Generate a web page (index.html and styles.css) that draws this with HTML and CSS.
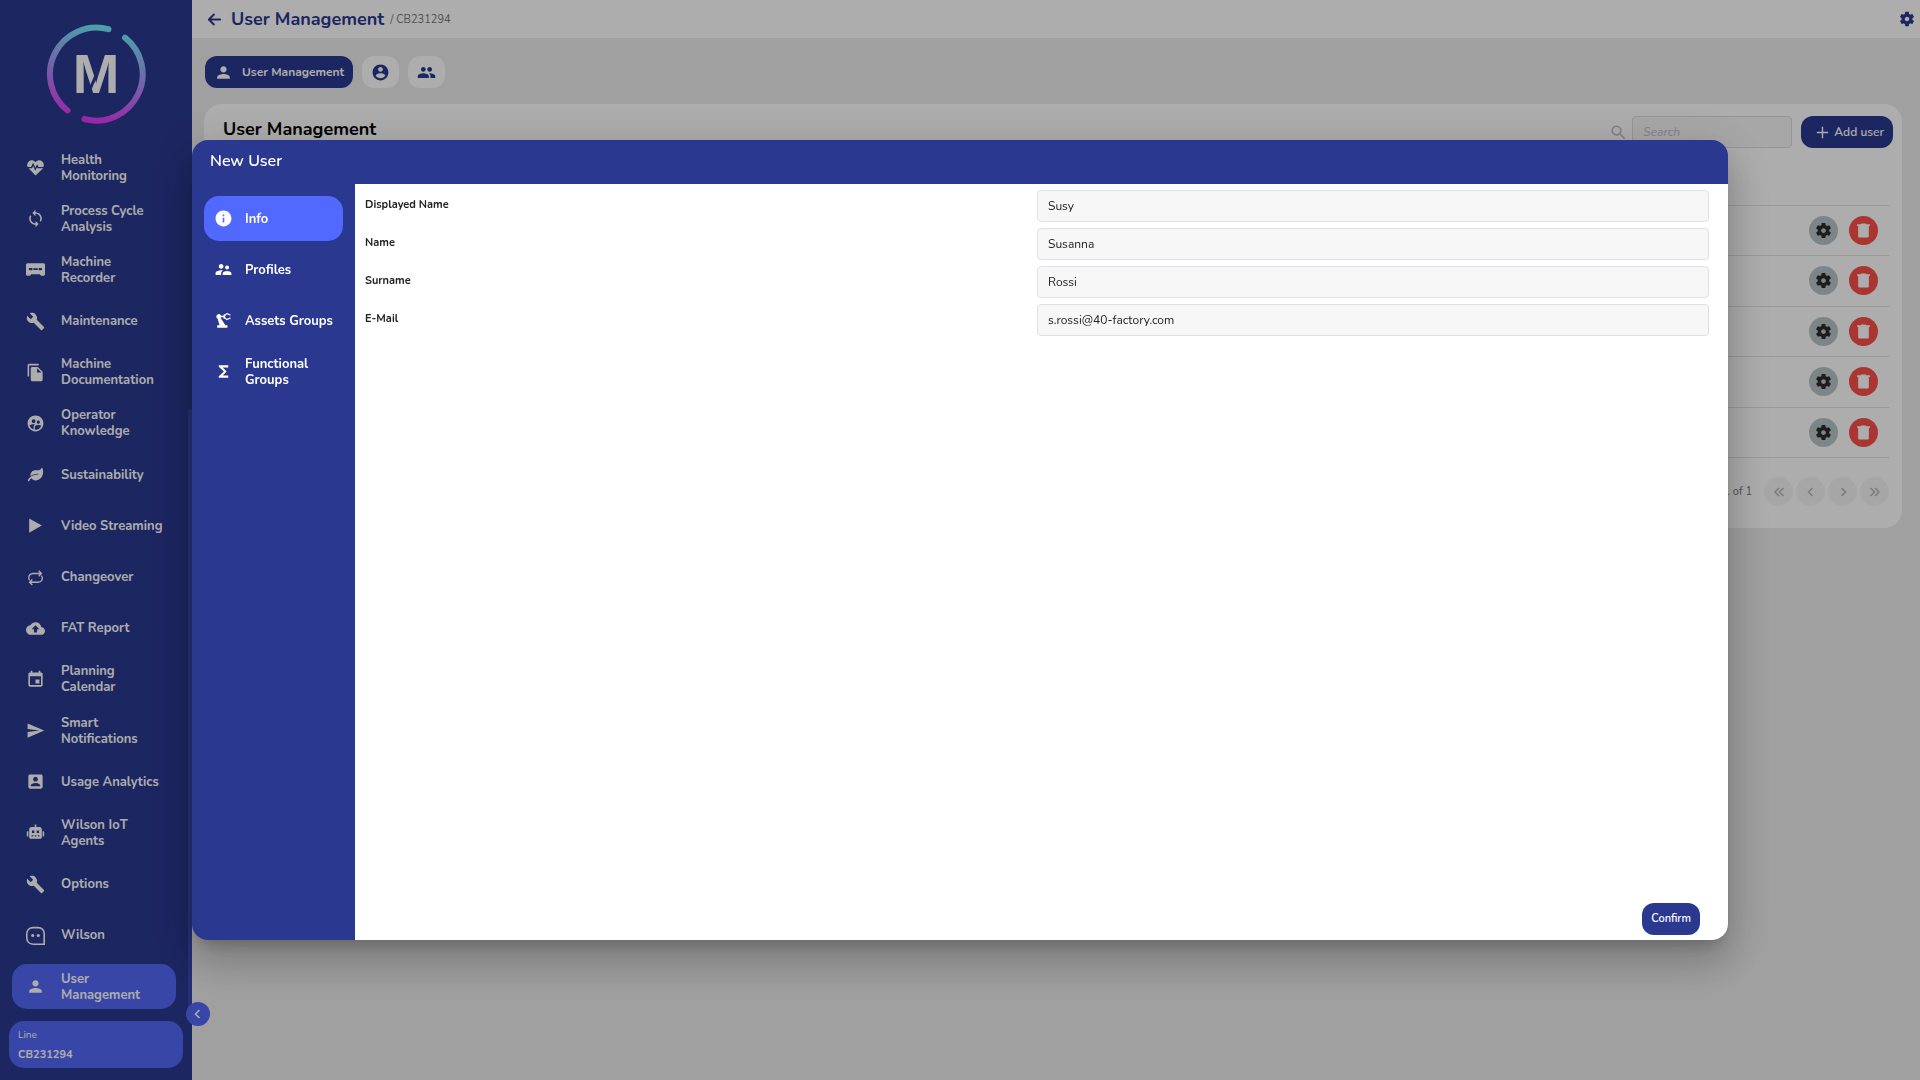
FILE: index.html
```html
<!DOCTYPE html>
<html lang="en">
  <head>
    <meta charset="UTF-8" />
    <meta name="viewport" content="width=device-width, initial-scale=1.0" />
    <title>User Management</title>
    <link rel="stylesheet" href="styles.css">
  </head>
  <body>
    <!-- icon sprite -->
    <svg class="sprite" aria-hidden="true">
      <symbol id="heart" viewBox="0 0 24 24">
        <path d="M12 22 3.3 13h4.2l1.6-3 2.6 6 2.2-4.4.8 1.4h7L12 22zM2 11.4C1 8.600 1.600 5.600 3.800 4 6.200 2.200 9.600 2.600 12 5.400c2.400-2.800 5.800-3.200 8.200-1.400 2.200 1.600 2.800 4.600 1.800 7.400h-6.200L14 8l-2.200 4.400L9 6l-2.600 5.400z" />
      </symbol>
      <symbol id="sync" viewBox="0 0 24 24">
        <path d="M12 4V1L8 5l4 4V6c3.310 0 6 2.690 6 6 0 1.010-.25 1.970-.7 2.800l1.460 1.460C19.540 15.030 20 13.570 20 12c0-4.420-3.580-8-8-8zm0 14c-3.310 0-6-2.690-6-6 0-1.010.25-1.970.7-2.800L5.240 7.740C4.460 8.970 4 10.430 4 12c0 4.420 3.580 8 8 8v3l4-4-4-4v3z" />
      </symbol>
      <symbol id="recorder" viewBox="0 0 24 24">
        <path fill-rule="evenodd" d="M2 4h20c1.100 0 2 .9 2 2v12c0 1.100-.9 2-2 2h-3l-1.500-2h-11L5 20H2c-1.100 0-2-.9-2-2V6c0-1.100.9-2 2-2zm3 6c-1 0-1.500.6-1.500 1.500S4 13 5 13h3v-3H5zm4.200.5v2h5.600v-2H9.200zM16 10v3h3c1 0 1.500-.6 1.500-1.500S20 10 19 10h-3z" />
      </symbol>
      <symbol id="wrench" viewBox="0 0 24 24">
        <path d="M22.700 19l-9.100-9.100c.9-2.300.4-5-1.500-6.900-2-2-5-2.400-7.400-1.300L9 6 6 9 1.600 4.700C.4 7.100.9 10.100 2.900 12.100c1.900 1.900 4.600 2.400 6.900 1.500l9.100 9.100c.4.4 1 .4 1.400 0l2.300-2.300c.5-.4.5-1.100.1-1.400z" />
      </symbol>
      <symbol id="copy" viewBox="0 0 24 24">
        <path d="M16 1H4c-1.100 0-2 .9-2 2v14h2V3h12V1zm-1 4l6 6v10c0 1.100-.9 2-2 2H8c-1.100 0-2-.9-2-2V7c0-1.100.9-2 2-2h7zm-1 7h5.500L14 6.500V12z" />
      </symbol>
      <symbol id="group-circle" viewBox="0 0 24 24">
        <path d="M12 2C6.480 2 2 6.480 2 12s4.480 10 10 10 10-4.480 10-10S17.520 2 12 2zm3.610 6.340c1.070 0 1.930.86 1.930 1.930s-.86 1.930-1.930 1.930-1.930-.86-1.930-1.930.86-1.930 1.930-1.930zm-6-1.580c1.300 0 2.360 1.060 2.360 2.360s-1.060 2.360-2.360 2.360-2.360-1.060-2.360-2.360 1.050-2.360 2.360-2.360zm0 9.130v3.750c-2.400-.75-4.300-2.600-5.140-4.960 1.050-1.120 3.670-1.690 5.140-1.690.53 0 1.200.08 1.900.22-1.640.87-1.900 2.020-1.900 2.680zM12 20c-.27 0-.53-.01-.79-.04v-4.070c0-1.420 2.940-2.130 4.400-2.130 1.070 0 2.920.39 3.840 1.150C18.280 17.880 15.390 20 12 20z" />
      </symbol>
      <symbol id="leaf" viewBox="-70 -80 716 672">
        <path d="M546 10c-6-13-22-13-28-1-31 53-87 87-150 87h-80C182 96 96 182 96 288c0 7 1 14 2 20 63-45 156-84 286-84 9 0 16 7 16 16s-7 16-16 16C133 256 26 410 2 468c-6 16 2 35 18 42 16 6 35-2 42-18 1-4 20-48 72-90 32 44 94 85 174 77 158-12 268-153 268-325 0-50-11-102-30-144z" />
      </symbol>
      <symbol id="play" viewBox="0 0 24 24"><path d="M4 3v18l16-9z" /></symbol>
      <symbol id="repeat" viewBox="0 0 24 24">
        <g fill="none" stroke="currentColor" stroke-width="1.700">
          <path d="M4.500 15.500C2 12 4 7 8.500 7H19M16 3.500 19.500 7 16 10.500M19.500 9.500C22 13 20 18 15.500 18H5M8 14.500 4.500 18 8 21.500" />
        </g>
      </symbol>
      <symbol id="cloud" viewBox="0 0 24 24">
        <path d="M19.350 10.040C18.670 6.590 15.640 4 12 4 9.110 4 6.600 5.640 5.350 8.040 2.340 8.360 0 10.910 0 14c0 3.310 2.690 6 6 6h13c2.760 0 5-2.240 5-5 0-2.640-2.050-4.780-4.650-4.960zM14 13v4h-4v-4H7l5-5 5 5h-3z" />
      </symbol>
      <symbol id="calendar" viewBox="0 0 24 24">
        <path d="M17 12h-5v5h5v-5zM16 1v2H8V1H6v2H5c-1.100 0-2 .9-2 2v14c0 1.100.9 2 2 2h14c1.100 0 2-.9 2-2V5c0-1.100-.9-2-2-2h-1V1h-2zm3 18H5V8h14v11z" />
      </symbol>
      <symbol id="send" viewBox="0 0 24 24"><path d="M2 21l21-9L2 3v7l15 2-15 2z" /></symbol>
      <symbol id="account-box" viewBox="0 0 24 24">
        <path d="M3 5v14c0 1.100.9 2 2 2h14c1.100 0 2-.9 2-2V5c0-1.100-.9-2-2-2H5c-1.100 0-2 .9-2 2zm12 4c0 1.660-1.340 3-3 3s-3-1.340-3-3 1.340-3 3-3 3 1.340 3 3zm-9 8c0-2 4-3.100 6-3.100s6 1.100 6 3.100v1H6v-1z" />
      </symbol>
      <symbol id="robot" viewBox="0 0 24 24">
        <path fill-rule="evenodd" d="M11 2h2v3h4c1.700 0 3 1.300 3 3v10c0 1.100-.9 2-2 2H6c-1.100 0-2-.9-2-2V8c0-1.700 1.300-3 3-3h4V2zM7.500 9.500v3h3v-3h-3zm6 0v3h3v-3h-3zM7 15.500v1.500h2v-1.500H7zm4 0v1.500h2v-1.500h-2zm4 0v1.500h2v-1.500h-2zM1.500 10.500H3v6.500H2c-.6 0-1-.4-1-1v-4.500zM21 10.500h1c.6 0 1 .4 1 1V16c0 .6-.4 1-1 1h-1z" />
      </symbol>
      <symbol id="wilson" viewBox="0 0 24 24">
        <path fill="none" stroke="currentColor" stroke-width="2" d="M23 23H9c-5 0-8-3.500-8-8.500V10C1 5 4.500 2 9 2h6c5 0 8 3.500 8 8z" />
        <circle cx="8.500" cy="12" r="2" /><circle cx="15.500" cy="12" r="2" />
      </symbol>
      <symbol id="person" viewBox="0 0 24 24">
        <path d="M12 12c2.210 0 4-1.790 4-4s-1.790-4-4-4-4 1.790-4 4 1.790 4 4 4zm0 2c-2.670 0-8 1.340-8 4v2h16v-2c0-2.660-5.330-4-8-4z" />
      </symbol>
      <symbol id="account-circle" viewBox="0 0 24 24">
        <path d="M12 2C6.480 2 2 6.480 2 12s4.480 10 10 10 10-4.480 10-10S17.520 2 12 2zm0 3c1.660 0 3 1.340 3 3s-1.340 3-3 3-3-1.340-3-3 1.340-3 3-3zm0 14.200c-2.500 0-4.710-1.280-6-3.220.03-1.990 4-3.080 6-3.080 1.990 0 5.970 1.090 6 3.080-1.290 1.940-3.500 3.220-6 3.220z" />
      </symbol>
      <symbol id="people" viewBox="0 0 24 24">
        <path d="M16 11c1.660 0 3-1.340 3-3s-1.340-3-3-3-3 1.340-3 3 1.340 3 3 3zm-8 0c1.660 0 3-1.340 3-3S9.660 5 8 5 5 6.340 5 8s1.340 3 3 3zm0 2c-2.330 0-7 1.170-7 3.500V19h14v-2.500c0-2.330-4.670-3.500-7-3.500zm8 0c-.29 0-.62.02-.97.05 1.160.84 1.970 1.970 1.970 3.450V19h6v-2.500c0-2.330-4.670-3.500-7-3.500z" />
      </symbol>
      <symbol id="profiles" viewBox="0 0 24 24">
        <path d="M16.500 12c1.380 0 2.500-1.120 2.500-2.500S17.880 7 16.500 7 14 8.120 14 9.500s1.120 2.500 2.500 2.500zM9 11c1.660 0 3-1.340 3-3s-1.340-3-3-3-3 1.340-3 3 1.340 3 3 3zm7.500 3c-1.830 0-5.500.92-5.500 2.750V19h11v-2.250c0-1.830-3.670-2.750-5.500-2.750zM9 13c-2.330 0-7 1.170-7 3.500V19h7v-2.250c0-.85.33-2.340 2.370-3.470C10.500 13.100 9.660 13 9 13z" />
      </symbol>
      <symbol id="info" viewBox="0 0 24 24">
        <path d="M12 2C6.480 2 2 6.480 2 12s4.480 10 10 10 10-4.480 10-10S17.520 2 12 2zm1 15h-2v-6h2v6zm0-8h-2V7h2v2z" />
      </symbol>
      <symbol id="machine" viewBox="0 0 24 24">
        <path d="M19.900 8.300l-3.600 1.700L14 7.700V6.300L16.300 4l3.600 1.700c.4.200.8 0 1-.4.200-.4 0-.8-.3-1l-4-1.800c-.3-.2-.8-.1-1.100.2l-1.700 1.700C13.600 4.200 13.300 4 13 4c-.6 0-1 .4-1 1v1H8.800C8.300 4.600 7 3.700 5.400 4 4.200 4.300 3.200 5.300 3 6.500c-.2 1.300.5 2.500 1.500 3.100L7 18H4v3h13v-3h-2.600L8.400 8.800c.2-.3.300-.5.4-.8H12v1c0 .6.4 1 1 1 .3 0 .6-.2.8-.4l1.700 1.700c.3.300.8.4 1.100.2l4-1.800c.4-.2.500-.6.300-1-.2-.4-.6-.6-1-.4z" />
      </symbol>
      <symbol id="sigma" viewBox="0 0 24 24"><path d="M18 4H6v2l6.500 6L6 18v2h12v-3h-7l5-5-5-5h7z" /></symbol>
      <symbol id="gear" viewBox="0 0 24 24">
        <path d="M19.140 12.940c.04-.3.06-.61.06-.94 0-.32-.02-.64-.07-.94l2.030-1.580c.18-.14.23-.41.12-.61l-1.920-3.320c-.12-.22-.37-.29-.59-.22l-2.390.96c-.5-.38-1.030-.7-1.620-.94l-.36-2.540c-.04-.24-.24-.41-.48-.41h-3.840c-.24 0-.43.17-.47.41l-.36 2.540c-.59.24-1.130.57-1.620.94l-2.390-.96c-.22-.08-.47 0-.59.22L2.740 8.870c-.12.21-.08.47.12.61l2.030 1.580c-.05.3-.09.63-.09.94s.02.64.07.94l-2.030 1.580c-.18.14-.23.41-.12.61l1.920 3.320c.12.22.37.29.59.22l2.390-.96c.5.38 1.030.7 1.620.94l.36 2.540c.05.24.24.41.48.41h3.840c.24 0 .44-.17.47-.41l.36-2.540c.59-.24 1.130-.56 1.620-.94l2.390.96c.22.08.47 0 .59-.22l1.920-3.320c.12-.22.07-.47-.12-.61l-2.010-1.580zM12 15c-1.660 0-3-1.340-3-3s1.340-3 3-3 3 1.340 3 3-1.340 3-3 3z" />
      </symbol>
      <symbol id="search" viewBox="0 0 24 24">
        <path d="M15.500 14h-.79l-.28-.27C15.410 12.590 16 11.110 16 9.500 16 5.910 13.090 3 9.500 3S3 5.910 3 9.500 5.910 16 9.500 16c1.610 0 3.090-.59 4.230-1.570l.27.28v.79l5 4.990L20.490 19l-4.990-5zm-6 0C7.010 14 5 11.990 5 9.500S7.010 5 9.500 5 14 7.010 14 9.500 11.990 14 9.500 14z" />
      </symbol>
      <symbol id="plus" viewBox="0 0 24 24"><path d="M20 13h-7v7h-2v-7H4v-2h7V4h2v7h7z" /></symbol>
      <symbol id="trash" viewBox="0 0 24 24">
        <path d="M3 3h5l1-1h6l1 1h5v2.500h-1.500V20c0 1.100-.9 2-2 2h-11c-1.100 0-2-.9-2-2V5.500H3z" />
      </symbol>
      <symbol id="back" viewBox="0 0 24 24">
        <path fill="none" stroke="currentColor" stroke-width="3" stroke-linecap="round" stroke-linejoin="round" d="M21 12H4M11 4l-8 8 8 8" />
      </symbol>
      <symbol id="chevron-left" viewBox="0 0 24 24">
        <path fill="none" stroke="currentColor" stroke-width="3" d="M15 4l-8 8 8 8" />
      </symbol>
      <symbol id="chevron-right" viewBox="0 0 24 24">
        <path fill="none" stroke="currentColor" stroke-width="3" d="M9 4l8 8-8 8" />
      </symbol>
      <symbol id="first" viewBox="0 0 24 24">
        <path fill="none" stroke="currentColor" stroke-width="3" d="M12 4l-8 8 8 8M21 4l-8 8 8 8" />
      </symbol>
      <symbol id="last" viewBox="0 0 24 24">
        <path fill="none" stroke="currentColor" stroke-width="3" d="M12 4l8 8-8 8M3 4l8 8-8 8" />
      </symbol>
    </svg>

    <div class="app">
      <aside class="sidebar">
        <svg class="logo" viewBox="0 0 100 100" role="img" aria-label="M">
          <defs>
            <linearGradient id="ring" gradientUnits="userSpaceOnUse" x1="60" y1="5" x2="40" y2="95">
              <stop offset="0" stop-color="#73eafc" />
              <stop offset="1" stop-color="#e23bf7" />
            </linearGradient>
          </defs>
          <g fill="none" stroke="url(#ring)" stroke-width="6" stroke-linecap="round">
            <path d="M62.500 5.200A46.500 46.500 0 0 0 21.500 86.500" />
            <path d="M79 13.600A46.500 46.500 0 0 1 38.500 95.100" />
          </g>
          <text class="logo-letter" x="50" y="69" text-anchor="middle">M</text>
          <path class="logo-cut" d="M51 49 42 70" />
        </svg>

        <nav class="menu">
          <a href="#"><svg class="icon"><use href="#heart" /></svg><span>Health Monitoring</span></a>
          <a href="#"><svg class="icon"><use href="#sync" /></svg><span>Process Cycle Analysis</span></a>
          <a href="#"><svg class="icon"><use href="#recorder" /></svg><span>Machine Recorder</span></a>
          <a href="#"><svg class="icon"><use href="#wrench" /></svg><span>Maintenance</span></a>
          <a href="#"><svg class="icon"><use href="#copy" /></svg><span>Machine Documentation</span></a>
          <a href="#"><svg class="icon"><use href="#group-circle" /></svg><span>Operator Knowledge</span></a>
          <a href="#"><svg class="icon"><use href="#leaf" /></svg><span>Sustainability</span></a>
          <a href="#"><svg class="icon"><use href="#play" /></svg><span>Video Streaming</span></a>
          <a href="#"><svg class="icon"><use href="#repeat" /></svg><span>Changeover</span></a>
          <a href="#"><svg class="icon"><use href="#cloud" /></svg><span>FAT Report</span></a>
          <a href="#"><svg class="icon"><use href="#calendar" /></svg><span>Planning Calendar</span></a>
          <a href="#"><svg class="icon"><use href="#send" /></svg><span>Smart Notifications</span></a>
          <a href="#"><svg class="icon"><use href="#account-box" /></svg><span>Usage Analytics</span></a>
          <a href="#"><svg class="icon"><use href="#robot" /></svg><span>Wilson IoT Agents</span></a>
          <a href="#"><svg class="icon"><use href="#wrench" /></svg><span>Options</span></a>
          <a href="#"><svg class="icon"><use href="#wilson" /></svg><span>Wilson</span></a>
          <a href="#" class="active"><svg class="icon"><use href="#person" /></svg><span>User Management</span></a>
        </nav>

        <div class="line-card">
          <span>Line</span>
          <strong>CB231294</strong>
        </div>
        <button class="collapse-btn" aria-label="Collapse menu"><svg><use href="#chevron-left" /></svg></button>
      </aside>

      <main class="main">
        <header class="topbar">
          <a href="#" class="back" aria-label="Back"><svg><use href="#back" /></svg></a>
          <h1>User Management</h1>
          <span class="crumb">/ CB231294</span>
          <button class="settings-btn" aria-label="Settings"><svg><use href="#gear" /></svg></button>
        </header>

        <div class="tabs">
          <button class="tab tab-active"><svg class="icon"><use href="#person" /></svg>User Management</button>
          <button class="tab" aria-label="Profiles"><svg class="icon"><use href="#account-circle" /></svg></button>
          <button class="tab" aria-label="Groups"><svg class="icon"><use href="#people" /></svg></button>
        </div>

        <section class="card">
          <div class="card-head">
            <h2>User Management</h2>
            <label for="search" aria-label="Search"><svg><use href="#search" /></svg></label>
            <input id="search" class="search" type="text" placeholder="Search" />
            <button class="add-btn"><svg><use href="#plus" /></svg>Add user</button>
          </div>

          <table class="users">
            <thead>
              <tr><th></th></tr>
            </thead>
            <tbody>
              <tr><td><div class="row-actions">
                <button class="edit" aria-label="Edit"><svg><use href="#gear" /></svg></button>
                <button class="delete" aria-label="Delete"><svg><use href="#trash" /></svg></button>
              </div></td></tr>
              <tr><td><div class="row-actions">
                <button class="edit" aria-label="Edit"><svg><use href="#gear" /></svg></button>
                <button class="delete" aria-label="Delete"><svg><use href="#trash" /></svg></button>
              </div></td></tr>
              <tr><td><div class="row-actions">
                <button class="edit" aria-label="Edit"><svg><use href="#gear" /></svg></button>
                <button class="delete" aria-label="Delete"><svg><use href="#trash" /></svg></button>
              </div></td></tr>
              <tr><td><div class="row-actions">
                <button class="edit" aria-label="Edit"><svg><use href="#gear" /></svg></button>
                <button class="delete" aria-label="Delete"><svg><use href="#trash" /></svg></button>
              </div></td></tr>
              <tr><td><div class="row-actions">
                <button class="edit" aria-label="Edit"><svg><use href="#gear" /></svg></button>
                <button class="delete" aria-label="Delete"><svg><use href="#trash" /></svg></button>
              </div></td></tr>
            </tbody>
          </table>

          <div class="pager">
            <span>1 of 1</span>
            <button disabled aria-label="First page"><svg><use href="#first" /></svg></button>
            <button disabled aria-label="Previous page"><svg><use href="#chevron-left" /></svg></button>
            <button disabled aria-label="Next page"><svg><use href="#chevron-right" /></svg></button>
            <button disabled aria-label="Last page"><svg><use href="#last" /></svg></button>
          </div>
        </section>
      </main>
    </div>

    <div class="backdrop">
      <div class="dialog" role="dialog" aria-labelledby="dialog-title">
        <h2 class="dialog-title" id="dialog-title">New User</h2>
        <div class="dialog-body">
          <nav class="dialog-menu">
            <a href="#" class="active"><svg class="icon"><use href="#info" /></svg><span>Info</span></a>
            <a href="#"><svg class="icon"><use href="#profiles" /></svg><span>Profiles</span></a>
            <a href="#"><svg class="icon"><use href="#machine" /></svg><span>Assets Groups</span></a>
            <a href="#"><svg class="icon"><use href="#sigma" /></svg><span>Functional Groups</span></a>
          </nav>
          <form class="user-form">
            <div class="fields">
              <label for="displayed-name">Displayed Name</label>
              <input id="displayed-name" type="text" value="Susy" />
              <label for="name">Name</label>
              <input id="name" type="text" value="Susanna" />
              <label for="surname">Surname</label>
              <input id="surname" type="text" value="Rossi" />
              <label for="email">E-Mail</label>
              <input id="email" type="email" value="s.rossi@40-factory.com" />
            </div>
            <button type="button" class="confirm-btn">Confirm</button>
          </form>
        </div>
      </div>
    </div>
  </body>
</html>
```
FILE: styles.css
```css
* {
  margin: 0;
  padding: 0;
  box-sizing: border-box;
}

body {
  background-color: #ececec;
  color: #222;
  font-family: Nunito, Lato, sans-serif;
  font-size: 12px;
}

a {
  color: inherit;
  text-decoration: none;
}

button,
input {
  font: inherit;
  color: inherit;
}

button {
  border: none;
  cursor: pointer;
}

svg {
  display: block;
  fill: currentColor;
}

.sprite {
  display: none;
}

.icon {
  width: 19px;
  height: 19px;
  flex-shrink: 0;
}

.app {
  display: flex;
  min-height: 100vh;
}

/* sidebar */
.sidebar {
  position: relative;
  display: flex;
  flex-direction: column;
  width: 192px;
  height: 100vh;
  padding: 24px 9px 12px;
  background-color: #2a388f;
  color: white;
  flex-shrink: 0;
}

/* scrollbar thumb */
.sidebar::after {
  content: "";
  position: absolute;
  top: 409px;
  right: 0;
  bottom: 66px;
  width: 4px;
  border-radius: 2px;
  background-color: #3747a8;
}

.logo {
  width: 100px;
  height: 100px;
  margin: 0 auto 21px;
  flex-shrink: 0;
}

.logo-letter {
  font-family: "Liberation Sans", sans-serif;
  font-size: 56px;
  font-weight: bold;
}

.logo-cut {
  stroke: #2a388f;
  stroke-width: 3;
}

.menu {
  display: flex;
  flex-direction: column;
  justify-content: space-between;
  flex: 1;
  padding: 0 7px 0 3px;
  margin-bottom: 12px;
}

.menu a,
.dialog-menu a {
  display: flex;
  align-items: center;
  height: 45px;
  border-radius: 15px;
  font-size: 13px;
  font-weight: bold;
  line-height: 16px;
}

.menu a {
  gap: 16px;
  padding: 0 10px 0 14px;
}

.menu a span {
  max-width: 105px;
}

.menu .active,
.dialog-menu .active {
  background-color: #5269ff;
}

.menu .active {
  background-color: #5168f6;
}

.line-card {
  display: flex;
  flex-direction: column;
  justify-content: center;
  gap: 4px;
  width: 174px;
  height: 47px;
  padding: 0 9px;
  border-radius: 15px;
  background-color: #5168f6;
  font-size: 11px;
  line-height: 15px;
}

.line-card span {
  font-size: 10px;
}

.collapse-btn {
  position: absolute;
  right: -18px;
  bottom: 54px;
  z-index: 1;
  display: flex;
  align-items: center;
  justify-content: center;
  width: 24px;
  height: 24px;
  border-radius: 50%;
  background-color: #5168f6;
}

.collapse-btn svg {
  width: 12px;
  height: 12px;
}

/* page */
.main {
  flex: 1;
  min-width: 0;
}

.topbar {
  display: flex;
  align-items: center;
  height: 38px;
  padding: 0 4px 0 15px;
  background-color: white;
  color: #2a388f;
}

.back svg {
  width: 15px;
  height: 15px;
}

.topbar h1 {
  margin-left: 9px;
  font-size: 18px;
  font-weight: bold;
}

.crumb {
  margin-left: 6px;
  color: #777;
  font-size: 11px;
}

.settings-btn {
  margin-left: auto;
  background: none;
}

.settings-btn svg {
  width: 18px;
  height: 18px;
}

.tabs {
  display: flex;
  gap: 9px;
  padding: 18px 13px 16px;
}

.tab {
  display: flex;
  align-items: center;
  gap: 9px;
  height: 32px;
  padding: 0 9px;
  border-radius: 12px;
  background-color: white;
  color: #2a388f;
  font-weight: bold;
}

.tab-active {
  background-color: #2a388f;
  color: white;
}

.card {
  margin: 0 18px 0 12px;
  padding: 12px 13px 22px 19px;
  border-radius: 18px;
  background-color: white;
}

.card-head {
  display: flex;
  align-items: center;
  margin-right: -4px;
}

.card-head h2 {
  margin-right: auto;
  color: black;
  font-size: 18px;
  font-weight: bold;
  line-height: 26px;
  align-self: flex-start;
}

.card-head label svg {
  width: 19px;
  height: 19px;
  color: #bdc4c9;
}

.search {
  width: 160px;
  height: 32px;
  margin: 0 9px 0 4px;
  padding: 0 10px;
  border: 1px solid #d9dcdf;
  border-radius: 4px;
  background-color: #f7f7f7;
}

.search::placeholder {
  color: #bdc4c9;
  font-style: italic;
}

.add-btn {
  display: flex;
  align-items: center;
  gap: 3px;
  height: 32px;
  padding: 0 9px 0 13px;
  border-radius: 12px;
  background-color: #2a388f;
  color: white;
  font-weight: 600;
}

.add-btn svg {
  width: 17px;
  height: 17px;
}

.users {
  width: 100%;
  height: 310px;
  border-collapse: collapse;
}

.users th {
  height: 57px;
}

.users tr {
  border-bottom: 1px solid #e2e2e2;
}

.row-actions {
  display: flex;
  justify-content: flex-end;
  gap: 11px;
  padding-right: 11px;
}

.row-actions button,
.pager button {
  display: flex;
  align-items: center;
  justify-content: center;
  width: 29px;
  height: 29px;
  border-radius: 50%;
}

.row-actions .edit {
  background-color: #bac5c9;
  color: #2c2c2c;
}

.row-actions .delete {
  background-color: #fa5049;
  color: white;
}

.row-actions svg {
  width: 19px;
  height: 19px;
}

.row-actions .delete svg {
  width: 17px;
  height: 17px;
}

.pager {
  display: flex;
  align-items: center;
  justify-content: flex-end;
  gap: 3px;
  margin-top: 19px;
  color: #777;
}

.pager span {
  margin-right: 9px;
  font-size: 11px;
}

.pager button {
  background-color: #f5f5f5;
  color: #b5b5b5;
}

.pager svg {
  width: 12px;
  height: 12px;
}

/* dialog */
.backdrop {
  position: fixed;
  inset: 0;
  z-index: 10;
  display: flex;
  align-items: center;
  justify-content: center;
  background-color: rgba(0, 0, 0, 0.32);
}

.dialog {
  display: flex;
  flex-direction: column;
  width: 80vw;
  height: 74vh;
  border-radius: 16px;
  background-color: #2a388f;
  color: white;
  overflow: hidden;
  box-shadow: 0 11px 15px -7px rgba(0, 0, 0, 0.2),
    0 24px 38px 3px rgba(0, 0, 0, 0.14), 0 9px 46px 8px rgba(0, 0, 0, 0.12);
}

.dialog-title {
  height: 44px;
  padding-left: 18px;
  font-size: 16px;
  font-weight: 600;
  line-height: 42px;
}

.dialog-body {
  display: flex;
  flex: 1;
}

.dialog-menu {
  display: flex;
  flex-direction: column;
  gap: 6px;
  width: 163px;
  padding: 12px;
}

.dialog-menu a {
  gap: 12px;
  padding: 0 6px 0 10px;
}

.user-form {
  display: flex;
  flex-direction: column;
  justify-content: space-between;
  flex: 1;
  padding: 6px 19px 5px 10px;
  background-color: white;
  color: #222;
}

.fields {
  display: grid;
  grid-template-columns: 1fr 1fr;
  gap: 6px 0;
}

.fields label {
  font-size: 11px;
  font-weight: bold;
  line-height: 30px;
}

.fields input {
  height: 32px;
  padding: 0 10px;
  border: 1px solid #dee2e6;
  border-radius: 4px;
  background-color: #f7f7f7;
}

.confirm-btn {
  align-self: flex-end;
  height: 32px;
  margin-right: 9px;
  padding: 0 9px;
  border-radius: 12px;
  background-color: #2a388f;
  color: white;
  font-size: 11px;
  font-weight: 600;
}
```
